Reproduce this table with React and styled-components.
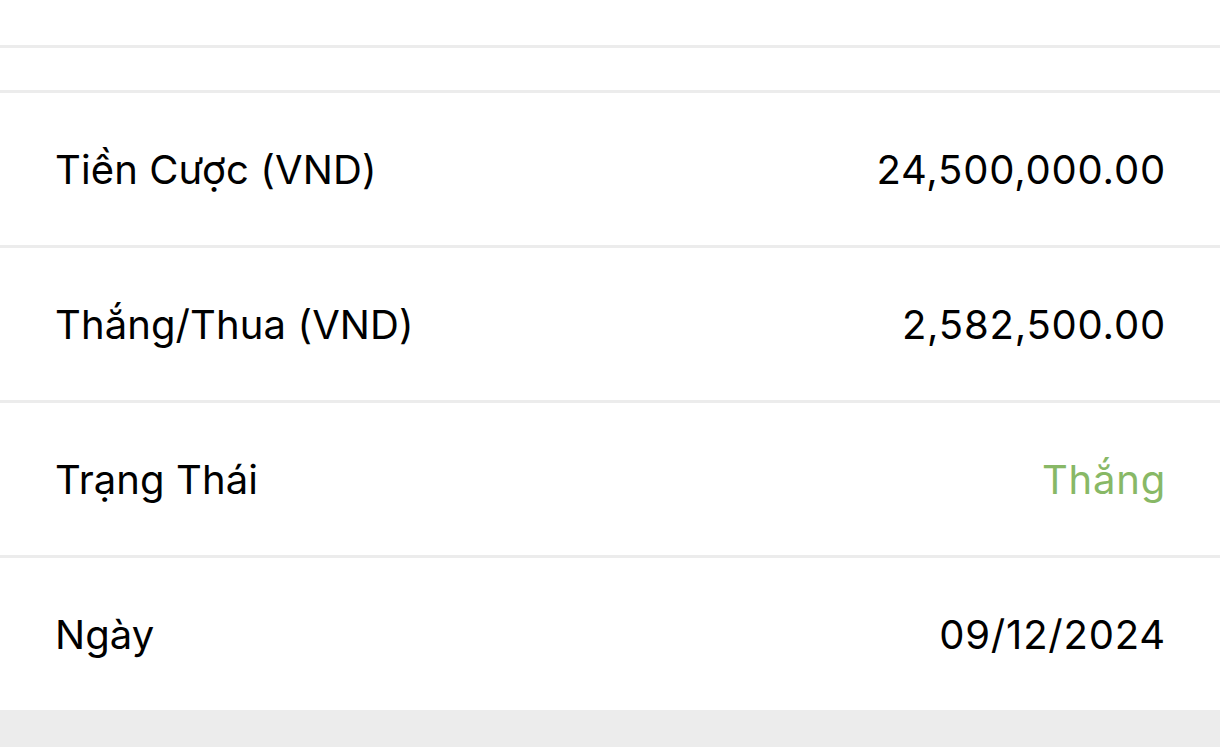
import React from "react";
import styled, { createGlobalStyle } from "styled-components";

const GlobalStyle = createGlobalStyle`
  html, body {
    margin: 0;
    padding: 0;
    background: #ffffff;
  }
  body {
    font-family: Inter, "Noto Sans", sans-serif;
  }
`;

const rows = [
  { label: "Tiền Cược (VND)", value: "24,500,000.00" },
  { label: "Thắng/Thua (VND)", value: "2,582,500.00" },
  { label: "Trạng Thái", value: "Thắng", win: true },
  { label: "Ngày", value: "09/12/2024" },
];

export default function App() {
  return (
    <Page>
      <GlobalStyle />
      <TopGap />
      <Spacer />
      <List>
        {rows.map((row) => (
          <Row key={row.label}>
            <Label>{row.label}</Label>
            <Value $win={row.win}>{row.value}</Value>
          </Row>
        ))}
      </List>
      <Footer />
    </Page>
  );
}

const Page = styled.div`
  width: 1220px;
  height: 747px;
  overflow: hidden;
  display: flex;
  flex-direction: column;
  background: #ffffff;
`;

const TopGap = styled.div`
  height: 45px;
  border-bottom: 3px solid #ececec;
`;

const Spacer = styled.div`
  height: 42px;
`;

const List = styled.div`
  display: flex;
  flex-direction: column;
`;

const Row = styled.div`
  height: 152px;
  border-top: 3px solid #ececec;
  display: flex;
  align-items: center;
  justify-content: space-between;
  padding: 0 55px;
`;

const Label = styled.span`
  font-size: 40px;
  color: #000000;
  letter-spacing: 0.1px;
`;

const Value = styled.span`
  font-size: 40px;
  color: ${(p) => (p.$win ? "#88b866" : "#000000")};
  letter-spacing: 0.8px;
  margin-right: -1px;
`;

const Footer = styled.div`
  flex: 1;
  background: #ececec;
`;
